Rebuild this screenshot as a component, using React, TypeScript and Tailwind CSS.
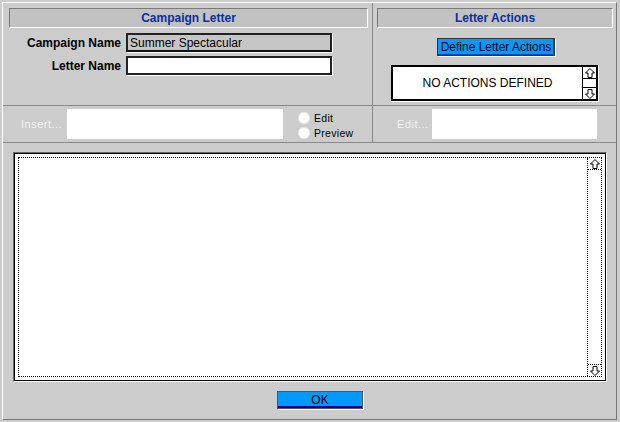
import React from 'react';

const font = { fontFamily: '"Liberation Sans", Arial, sans-serif' };

function UpArrow() {
  return (
    <svg width="10" height="10" viewBox="0 0 10 10" className="block">
      <path d="M5 0.5 L9.5 5 L7 5 L7 9.5 L3 9.5 L3 5 L0.5 5 Z" fill="white" stroke="black" strokeWidth="1" />
    </svg>
  );
}

function DownArrow() {
  return (
    <svg width="10" height="10" viewBox="0 0 10 10" className="block">
      <path d="M5 9.5 L9.5 5 L7 5 L7 0.5 L3 0.5 L3 5 L0.5 5 Z" fill="white" stroke="black" strokeWidth="1" />
    </svg>
  );
}

function Header({ title }: { title: string }) {
  return (
    <div className="h-[20px] bg-[#c2c2c2] border-t border-l border-[#7a7a7a] border-r-white border-b-white border-r border-b flex items-center justify-center">
      <span className="text-[12px] font-bold text-[#0a2f9e] leading-none">{title}</span>
    </div>
  );
}

function Radio({ label }: { label: string }) {
  return (
    <div className="flex items-center gap-[4px] h-[15px]">
      <div className="w-[12px] h-[12px] rounded-full bg-white shadow-[inset_0_0_0_1px_#e4e4e4]" />
      <span className="text-[10.5px] text-black tracking-[0.3px] leading-none">{label}</span>
    </div>
  );
}

export default function App() {
  return (
    <div style={font} className="w-[620px] h-[422px] bg-[#cccccc] overflow-hidden">
      <div className="ml-[2px] mt-[2px] w-[615px] h-[418px] border-l border-t border-white border-r border-b border-r-[#777] border-b-[#777] flex flex-col">
        {/* top section */}
        <div className="h-[103px] flex border-b border-[#8a8a8a]">
          <div className="w-[370px] border-r border-[#8a8a8a] pl-[6px] pr-[4px] pt-[5px]">
            <Header title="Campaign Letter" />
            <div className="mt-[5px] flex items-center -ml-[6px]">
              <div className="w-[118px] text-right text-[12px] font-bold">Campaign Name</div>
              <div className="ml-[5px] w-[206px] h-[19px] bg-[#c6c6c6] border-2 border-[#222] border-b-[#111] shadow-[1px_1px_0_#fff] flex items-center pl-[2px] text-[12px] leading-none">
                Summer Spectacular
              </div>
            </div>
            <div className="mt-[4px] flex items-center -ml-[6px]">
              <div className="w-[118px] text-right text-[12px] font-bold">Letter Name</div>
              <div className="ml-[5px] w-[206px] h-[19px] bg-white border-2 border-[#222] shadow-[1px_1px_0_#fff]" />
            </div>
          </div>
          <div className="flex-1 pl-[4px] pr-[3px] pt-[5px]">
            <Header title="Letter Actions" />
            <div className="mt-[10px] flex justify-center pl-[2px]">
              <button className="w-[118px] h-[18px] bg-[#0099ff] border border-[#333] shadow-[1px_1px_0_#fff,inset_-1px_-1px_0_#0044cc] text-[12px] leading-none text-black flex items-center justify-center">
                Define Letter Actions
              </button>
            </div>
            <div className="mt-[9px] ml-[14px] w-[207px] h-[36px] bg-white border-2 border-black shadow-[1px_1px_0_#fff] flex">
              <div className="flex-1 flex items-center justify-center text-[12px] leading-none">NO ACTIONS DEFINED</div>
              <div className="w-[14px] border-l border-black flex flex-col justify-between">
                <div className="h-[12px] border-b border-black flex items-center justify-center"><UpArrow /></div>
                <div className="h-[12px] border-t border-black flex items-center justify-center"><DownArrow /></div>
              </div>
            </div>
          </div>
        </div>
        {/* toolbar */}
        <div className="h-[37px] flex border-b border-[#8a8a8a]">
          <div className="w-[370px] border-r border-[#8a8a8a] flex items-center">
            <span className="ml-[18px] w-[46px] text-[11px] text-[#f2f2f2] tracking-[0.5px]">Insert...</span>
            <div className="w-[216px] h-[30px] bg-white" />
            <div className="ml-[15px] mt-[3px] flex flex-col">
              <Radio label="Edit" />
              <Radio label="Preview" />
            </div>
          </div>
          <div className="flex-1 flex items-center">
            <span className="ml-[24px] w-[35px] text-[11px] text-[#f2f2f2] tracking-[0.5px]">Edit...</span>
            <div className="w-[165px] h-[30px] bg-white" />
          </div>
        </div>
        {/* body */}
        <div className="flex-1 flex flex-col pt-[9px]">
          <div className="ml-[10px] w-[594px] h-[230px] border-t border-l border-[#666] border-r border-b border-r-white border-b-white">
            <div className="w-full h-full border border-black bg-white p-[3px]">
              <div className="w-full h-full border border-dotted border-black flex">
                <div className="flex-1" />
                <div className="w-[14px] border-l border-dotted border-black flex flex-col justify-between">
                  <div className="h-[12px] border-b border-dotted border-black flex items-center justify-center"><UpArrow /></div>
                  <div className="h-[12px] border-t border-dotted border-black flex items-center justify-center"><DownArrow /></div>
                </div>
              </div>
            </div>
          </div>
          <button className="mt-[9px] ml-[274px] w-[86px] h-[18px] bg-[#0099ff] border border-[#555] shadow-[1px_1px_0_#fff,inset_0_-2px_0_#0000aa] text-[12px] leading-none text-black flex items-center justify-center">
            OK
          </button>
        </div>
      </div>
    </div>
  );
}
